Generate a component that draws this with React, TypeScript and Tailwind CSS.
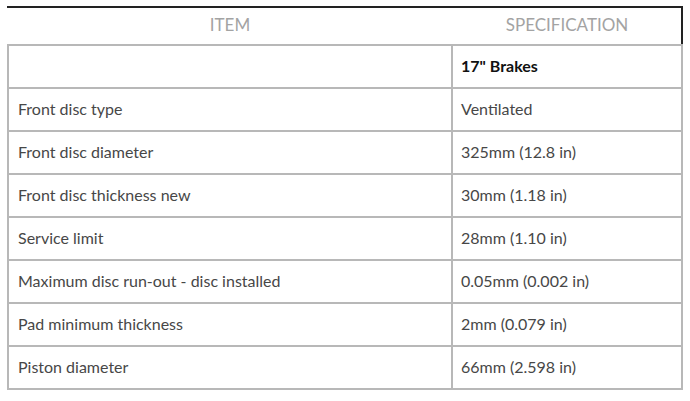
import React from "react";

const rows: [string, string, boolean?][] = [
  ["", '17" Brakes', true],
  ["Front disc type", "Ventilated"],
  ["Front disc diameter", "325mm (12.8 in)"],
  ["Front disc thickness new", "30mm (1.18 in)"],
  ["Service limit", "28mm (1.10 in)"],
  ["Maximum disc run-out - disc installed", "0.05mm (0.002 in)"],
  ["Pad minimum thickness", "2mm (0.079 in)"],
  ["Piston diameter", "66mm (2.598 in)"],
];

export default function App() {
  return (
    <div className="w-[690px] h-[401px] bg-white" style={{ fontFamily: "Lato, 'Open Sans', sans-serif" }}>
      <div className="ml-[7px] pt-[6px] w-[676px]">
        <div className="grid grid-cols-[446px_1fr] h-[38px] border-t-2 border-r-2 border-[#222222] text-[17px] text-[#a3a3a3] uppercase">
          <div className="flex items-center justify-center pb-[2px]">Item</div>
          <div className="flex items-center justify-center pb-[2px]">Specification</div>
        </div>
        <div className="border-2 border-[#b8b8b8] flex flex-col">
          {rows.map(([a, b, bold], i) => (
            <div
              key={i}
              className={`grid grid-cols-[444px_1fr] text-[16px] ${i > 0 ? "border-t-2 border-[#b8b8b8] h-[43px]" : "h-[41px]"}`}
            >
              <div className="flex items-center pl-[9px] pb-[2px] text-[#474747] border-r-2 border-[#b8b8b8]">{a}</div>
              <div className={`flex items-center pl-[8px] pb-[2px] ${bold ? "font-bold text-[#111111]" : "text-[#474747]"}`}>{b}</div>
            </div>
          ))}
        </div>
      </div>
    </div>
  );
}
